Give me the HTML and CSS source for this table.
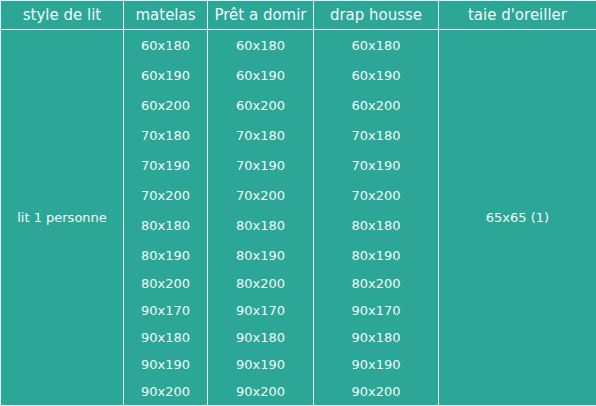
FILE: index.html
```html
<!DOCTYPE html>
<html lang="fr">
<head>
<meta charset="utf-8">
<title>Tailles</title>
<link rel="stylesheet" href="styles.css">
</head>
<body>
<table class="sizes">
  <colgroup>
    <col class="c1"><col class="c2"><col class="c3"><col class="c4"><col class="c5">
  </colgroup>
  <thead>
    <tr class="head">
      <th>style de lit</th><th>matelas</th><th>Prêt a domir</th><th>drap housse</th><th>taie d'oreiller</th>
    </tr>
  </thead>
  <tbody>
    <tr class="tall"><td rowspan="13">lit 1 personne</td><td>60x180</td><td>60x180</td><td>60x180</td><td rowspan="13">65x65 (1)</td></tr>
    <tr class="tall"><td>60x190</td><td>60x190</td><td>60x190</td></tr>
    <tr class="tall"><td>60x200</td><td>60x200</td><td>60x200</td></tr>
    <tr class="tall"><td>70x180</td><td>70x180</td><td>70x180</td></tr>
    <tr class="tall"><td>70x190</td><td>70x190</td><td>70x190</td></tr>
    <tr class="tall"><td>70x200</td><td>70x200</td><td>70x200</td></tr>
    <tr class="tall"><td>80x180</td><td>80x180</td><td>80x180</td></tr>
    <tr class="tall"><td>80x190</td><td>80x190</td><td>80x190</td></tr>
    <tr class="short"><td>80x200</td><td>80x200</td><td>80x200</td></tr>
    <tr class="short"><td>90x170</td><td>90x170</td><td>90x170</td></tr>
    <tr class="short"><td>90x180</td><td>90x180</td><td>90x180</td></tr>
    <tr class="short"><td>90x190</td><td>90x190</td><td>90x190</td></tr>
    <tr class="short"><td>90x200</td><td>90x200</td><td>90x200</td></tr>
  </tbody>
</table>
</body>
</html>
```
FILE: styles.css
```css
html, body {
  margin: 0;
  padding: 0;
  background: #ffffff;
}
.sizes {
  width: 596px;
  border-collapse: collapse;
  table-layout: fixed;
  background: #2ba697;
  color: #f2faf8;
  font-family: "DejaVu Sans", Verdana, sans-serif;
  border: 1px solid #e4f3f0;
}
.c1 { width: 123px; }
.c2 { width: 84px; }
.c3 { width: 106px; }
.c4 { width: 125px; }
.c5 { width: 158px; }
.sizes th, .sizes td {
  border-left: 1px solid #e4f3f0;
  border-right: 1px solid #e4f3f0;
  padding: 0;
  text-align: center;
  vertical-align: middle;
}
.sizes th {
  font-weight: normal;
  font-size: 15px;
  height: 28px;
  border-bottom: 1px solid #e4f3f0;
}
.sizes td {
  font-size: 13px;
}
.tall td { height: 30px; }
.short td { height: 27px; }
```
